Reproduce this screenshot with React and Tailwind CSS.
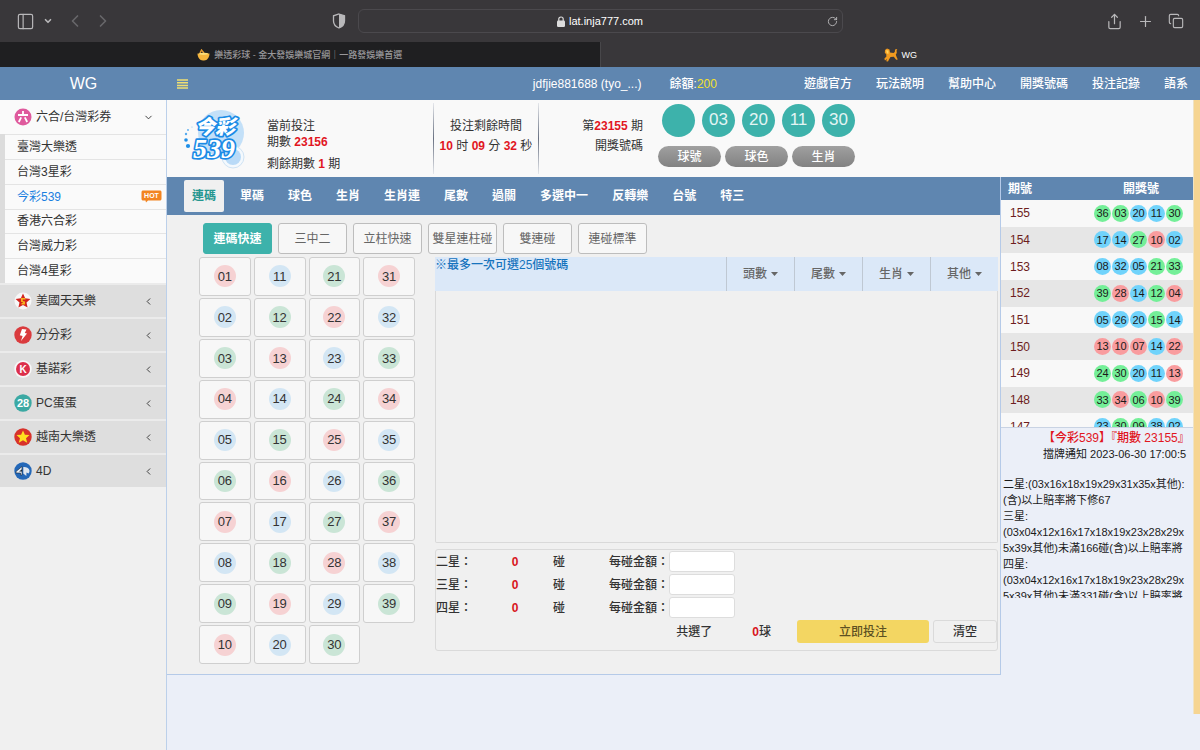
import { useState } from "react";
import { ChevronDown, ChevronLeft, ChevronRight, Copy, PanelLeft, Plus, RotateCw, Share } from "lucide-react";

const subGames = ["臺灣大樂透", "台灣3星彩", "今彩539", "香港六合彩", "台灣威力彩", "台灣4星彩"];
const betTabs = ["連碼", "單碼", "球色", "生肖", "生肖連", "尾數", "過關", "多選中一", "反轉樂", "台號", "特三"];
const playTypes = ["連碼快速", "三中二", "立柱快速", "雙星連柱碰", "雙連碰", "連碰標準"];
const topLinks = ["遊戲官方", "玩法說明", "幫助中心", "開獎號碼", "投注記錄", "語系"];
const filters = ["頭數", "尾數", "生肖", "其他"];
const stars = ["二星", "三星", "四星"];
const numbers = Array.from({ length: 39 }, (_, i) => i + 1);

const history = [
  { issue: "155", balls: [36, 3, 20, 11, 30] },
  { issue: "154", balls: [17, 14, 27, 10, 2] },
  { issue: "153", balls: [8, 32, 5, 21, 33] },
  { issue: "152", balls: [39, 28, 14, 12, 4] },
  { issue: "151", balls: [5, 26, 20, 15, 14] },
  { issue: "150", balls: [13, 10, 7, 14, 22] },
  { issue: "149", balls: [24, 30, 20, 11, 13] },
  { issue: "148", balls: [33, 34, 6, 10, 39] },
  { issue: "147", balls: [23, 30, 9, 38, 2] },
];

const notice = [
  "二星:(03x16x18x19x29x31x35x其他):",
  "(含)以上賠率將下修67",
  "三星:",
  "(03x04x12x16x17x18x19x23x28x29x",
  "5x39x其他)未滿166碰(含)以上賠率將",
  "四星:",
  "(03x04x12x16x17x18x19x23x28x29x",
  "5x39x其他)未滿331碰(含)以上賠率將",
];

// index is number % 3
const softColors = ["bg-[#cae5d6]", "bg-[#f6d2d3]", "bg-[#d3e6f4]"];
const brightColors = ["bg-[#74ef98]", "bg-[#f99c9e]", "bg-[#70d3fb]"];

const pad = (n) => String(n).padStart(2, "0");

const BrowserBar = () => (
  <div className="bg-[#39373a] text-[#b9b8ba]">
    <div className="flex items-center h-[42px]">
      <div className="flex-1 flex items-center pl-4">
        <button aria-label="Sidebar"><PanelLeft size={19} strokeWidth={1.5} /></button>
        <button aria-label="Tab groups" className="ml-2"><ChevronDown size={10} strokeWidth={4} /></button>
        <button aria-label="Back" className="ml-3 text-[#68676a]"><ChevronLeft size={20} strokeWidth={2} /></button>
        <button aria-label="Forward" className="ml-2 text-[#68676a]"><ChevronRight size={20} strokeWidth={2} /></button>
        <button aria-label="Privacy report" className="ml-auto mr-3">
          <svg width="14" height="16" viewBox="0 0 14 16">
            <path d="M7 1 L12.5 2.8 V8 C12.5 11.3 10 13.8 7 15 C4 13.8 1.5 11.3 1.5 8 V2.8 Z" fill="none" stroke="currentColor" strokeWidth="1.3" />
            <path d="M7 1 L12.5 2.8 V8 C12.5 11.3 10 13.8 7 15 Z" fill="currentColor" />
          </svg>
        </button>
      </div>
      <div className="relative w-[485px] h-6 flex items-center justify-center gap-1 rounded-md border border-[#4b494d] text-[11px] font-medium text-white">
        <svg width="8" height="11" viewBox="0 0 8 11">
          <rect x="0" y="4.5" width="8" height="6.5" rx="1.2" fill="#dddddd" />
          <path d="M1.8 5 V3 C1.8 0.3 6.2 0.3 6.2 3 V5" fill="none" stroke="#dddddd" strokeWidth="1.2" />
        </svg>
        <span>lat.inja777.com</span>
        <button aria-label="Reload" className="absolute right-1 text-[#b9b8ba]"><RotateCw size={11} /></button>
      </div>
      <div className="flex-1 flex items-center justify-end gap-[14px] pr-4">
        <button aria-label="Share"><Share size={17} strokeWidth={1.7} /></button>
        <button aria-label="New tab"><Plus size={17} strokeWidth={1.7} /></button>
        <button aria-label="Tab overview"><Copy size={16} strokeWidth={1.7} /></button>
      </div>
    </div>
    <div className="flex h-[25px] text-[9px]">
      <div className="flex-1 flex items-center justify-center gap-1 bg-[#1f1f21] border-r border-[#48474a] text-[#98979a] font-medium">
        <svg width="13" height="12" viewBox="0 0 13 12">
          <path d="M0.5 4.5 H12.5 C12.5 8 10.5 11.5 7 11.5 H6 C2.5 11.5 0.5 8 0.5 4.5 Z" fill="#f5b53d" />
          <path d="M3 4 L4.5 1 L7 4" stroke="#e59a2e" strokeWidth="1.4" fill="none" />
          <ellipse cx="6.5" cy="4.8" rx="4.5" ry="1.1" fill="#fbdc78" />
        </svg>
        <span>樂透彩球 - 金大發娛樂城官網｜一路發娛樂首選</span>
      </div>
      <div className="flex-1 flex items-center justify-center gap-1 text-white">
        <svg width="14" height="14" viewBox="0 0 14 14">
          <path d="M1 2 L3 0.5 L5.5 1.5 L6 4.5 L9.5 5 L10.8 4 L11 1.5 L13.3 1 L12.6 2.4 L12.8 5 L11.8 6.5 L12.6 9 L13.8 11.5 L12.2 11.8 L9.8 8.8 L6.5 9 L5 11.5 L4 13.6 L2.2 13.2 L3 11 L1 12.6 L0.3 10.8 L2.4 8.6 L2.2 6 L0.8 5 Z" fill="#f09a1f" />
          <path d="M2 2.2 L4.6 2.6 L4.4 6 L2.8 5.2 Z" fill="#ffd45e" />
        </svg>
        <span>WG</span>
      </div>
    </div>
  </div>
);

const Header = () => (
  <header className="flex items-center h-[33px] bg-[#5f86b0] text-white font-medium whitespace-nowrap">
    <a href="#" className="w-[167px] text-center text-base">WG</a>
    <button aria-label="選單" className="ml-[10px] text-[#efdf73]">
      <svg width="11" height="10" viewBox="0 0 11 10">
        <path d="M0 1 H11 M0 3.7 H11 M0 6.4 H11 M0 9.1 H11" stroke="currentColor" strokeWidth="1.5" />
      </svg>
    </button>
    <span className="ml-auto">jdfjie881688 (tyo_...)</span>
    <span className="ml-7">餘額:<span className="text-[#f3e02e]">200</span></span>
    <nav className="flex gap-6 ml-[87px] pr-3">
      {topLinks.map((link) => (
        <a key={link} href="#">{link}</a>
      ))}
    </nav>
  </header>
);

const GameIcon = ({ name }) => (
  <svg width="18" height="18" viewBox="0 0 18 18" className="shrink-0">
    {name === "six" && (
      <>
        <circle cx="9" cy="9" r="8.5" fill="#df5a9d" />
        <path d="M9 3 V6.6 M4 7 H14 M7.2 9.4 L4.8 14 M10.8 9.4 L13.2 14" stroke="#fff" strokeWidth="1.8" fill="none" />
      </>
    )}
    {name === "star" && (
      <>
        <circle cx="9" cy="9" r="8.5" fill="#f7f7f7" />
        <path d="M9 1.5 L11.2 6.3 L16.4 6.9 L12.5 10.4 L13.6 15.6 L9 13 L4.4 15.6 L5.5 10.4 L1.6 6.9 L6.8 6.3 Z" fill="#d3241f" />
        <path d="M7 6 H11.5 V7.5 H8.8 V9 L11 9.5 V12.5 H7.5 V11 H9 V10.4 L7 9.8 Z" fill="#f6b21c" />
      </>
    )}
    {name === "bolt" && (
      <>
        <circle cx="9" cy="9" r="8.7" fill="#da3b3e" />
        <path d="M8 3 L12.5 3.5 L10.8 7 L13 7.6 L7 15 L8.6 10 L5.8 9.3 Z" fill="#fff" />
      </>
    )}
    {name === "keno" && (
      <>
        <circle cx="9" cy="9" r="8.7" fill="#f8f8f8" />
        <circle cx="9" cy="9" r="7" fill="#dc2f4b" />
        <text x="9" y="12.5" textAnchor="middle" fontSize="10" fontWeight="bold" fill="#fff">K</text>
      </>
    )}
    {name === "pc" && (
      <>
        <circle cx="9" cy="9" r="8.7" fill="#3ba9a3" />
        <text x="9" y="12.7" textAnchor="middle" fontSize="11" fontWeight="bold" fill="#fff">28</text>
      </>
    )}
    {name === "vn" && (
      <>
        <circle cx="9" cy="9" r="8.7" fill="#d8322b" />
        <path d="M9 2.5 L10.9 6.8 L15.5 7.1 L12 10.2 L13.2 14.7 L9 12.2 L4.8 14.7 L6 10.2 L2.5 7.1 L7.1 6.8 Z" fill="#ffe01f" />
      </>
    )}
    {name === "4d" && (
      <>
        <circle cx="9" cy="9" r="8.7" fill="#2468b8" />
        <path d="M2 9.5 L8 4.5 V13 H6.5 V11 H2 Z" fill="#e8eef5" stroke="#1b2733" strokeWidth="0.6" />
        <path d="M9.3 5 C15 4.5 17 9 14.5 11.5 L12.5 10.5 L12.3 14 L9.3 11.5 Z" fill="#dfe6ee" />
        <path d="M5 9.5 H8 V7.2 Z" fill="#1b2733" />
      </>
    )}
  </svg>
);

const groups = [
  { name: "美國天天樂", icon: "star" },
  { name: "分分彩", icon: "bolt" },
  { name: "基諾彩", icon: "keno" },
  { name: "PC蛋蛋", icon: "pc" },
  { name: "越南大樂透", icon: "vn" },
  { name: "4D", icon: "4d" },
];

const Sidebar = () => (
  <aside className="w-[167px] shrink-0 bg-[#f0f0f0] border-r border-[#bcd0ea]">
    <button className="flex items-center gap-1 w-full h-[34px] pl-[14px] pr-3 bg-[#fafafa]">
      <GameIcon name="six" />
      <span>六合/台灣彩券</span>
      <ChevronDown size={11} className="ml-auto" />
    </button>
    <ul className="grid auto-rows-fr h-[149px] border-l-[5px] border-[#dcdcdc] bg-[#fafafa]">
      {subGames.map((game) => (
        <li key={game} className="border-t border-[#e4e4e4]">
          <a
            href="#"
            className={`flex items-center justify-between h-full pl-3 pr-1 ${game === "今彩539" ? "text-[#1a7fe0]" : ""}`}
          >
            {game}
            {game === "今彩539" && (
              <svg width="21" height="13" viewBox="0 0 21 13">
                <path d="M2.5 0.5 H18.5 C20 0.5 20.5 1 20.5 2.5 V8.5 C20.5 10 20 10.5 18.5 10.5 H7 L5 12.5 L4.5 10.5 H2.5 C1 10.5 0.5 10 0.5 8.5 V2.5 C0.5 1 1 0.5 2.5 0.5 Z" fill="#f28421" />
                <text x="10.5" y="8" textAnchor="middle" fontSize="7" fontWeight="bold" fill="#fff">HOT</text>
              </svg>
            )}
          </a>
        </li>
      ))}
    </ul>
    {groups.map((group) => (
      <button
        key={group.name}
        className="flex items-center gap-1 w-full h-[34px] pl-[14px] pr-3 bg-[#dedede] border-t-2 border-[#ebebeb]"
      >
        <GameIcon name={group.icon} />
        <span>{group.name}</span>
        <ChevronLeft size={11} className="ml-auto" />
      </button>
    ))}
  </aside>
);

const Logo = () => (
  <svg width="64" height="62" viewBox="0 0 64 62" role="img" aria-label="今彩539">
    <circle cx="38" cy="25" r="23" fill="#c3e0f8" />
    <circle cx="50" cy="49" r="11" fill="#f4f9fd" stroke="#cfe3f4" strokeWidth="1" />
    <circle cx="50" cy="49" r="8" fill="#b9daf7" />
    <circle cx="5" cy="38" r="2.1" fill="#1f8fe8" />
    <circle cx="3" cy="32" r="1.8" fill="#1f8fe8" />
    <circle cx="3" cy="26" r="1.2" fill="#55abef" />
    <circle cx="5" cy="22" r="0.9" fill="#55abef" />
    <circle cx="9" cy="19" r="0.6" fill="#8cc6f4" />
    <g fill="#fff" stroke="#1b8be6" strokeWidth="3.4" paintOrder="stroke" strokeLinejoin="round">
      <text x="12" y="26" fontSize="20" fontWeight="900" fontStyle="italic">今彩</text>
      <text x="10" y="50" fontSize="28" className="font-['Liberation_Serif',serif] font-bold italic">539</text>
    </g>
  </svg>
);

const Red = ({ children }) => <b className="text-[#e1161f]">{children}</b>;

const RoundInfo = () => (
  <section className="flex h-[77px] bg-[#f9f9f9] whitespace-nowrap">
    <div className="pl-4 pt-2 w-[100px]"><Logo /></div>
    <div className="w-[166px] pt-[18px] leading-4">
      <p>當前投注</p>
      <p>期數 <Red>23156</Red></p>
      <p className="mt-[6px]">剩餘期數 <Red>1</Red> 期</p>
    </div>
    <div className="w-px my-[3px] bg-gradient-to-b from-gray-200 via-gray-500 to-gray-200" />
    <div className="w-[104px] pt-4 leading-5 text-center">
      <p>投注剩餘時間</p>
      <p><Red>10</Red> 时 <Red>09</Red> 分 <Red>32</Red> 秒</p>
    </div>
    <div className="w-px my-[3px] bg-gradient-to-b from-gray-200 via-gray-500 to-gray-200" />
    <div className="w-[104px] pt-4 leading-5 text-right">
      <p>第<Red>23155</Red> 期</p>
      <p>開獎號碼</p>
    </div>
    <div className="pl-[15px] pt-1">
      <div className="flex gap-[7px] pl-1">
        {["", "03", "20", "11", "30"].map((ball, i) => (
          <span key={i} className="flex items-center justify-center size-[33px] rounded-full bg-[#3db2ab] text-[17px] text-[#e4f5f4]">
            {ball}
          </span>
        ))}
      </div>
      <div className="flex gap-1 mt-[9px] text-white font-medium">
        {["球號", "球色", "生肖"].map((label) => (
          <button key={label} className="w-[63px] h-[21px] rounded-full bg-gradient-to-b from-[#a0a0a0] to-[#828282]">
            {label}
          </button>
        ))}
      </div>
    </div>
  </section>
);

const BetPanel = () => {
  const [tab, setTab] = useState("連碼");
  const [play, setPlay] = useState("連碼快速");
  const [selected, setSelected] = useState([]);

  const toggle = (n) => {
    if (selected.includes(n)) {
      setSelected(selected.filter((s) => s !== n));
    } else if (selected.length < 25) {
      setSelected([...selected, n]);
    }
  };

  return (
    <main className="bg-[#f0f0f0] border-r border-b border-[#b5cae8] pb-[10px]">
      <div className="flex items-center gap-2 h-[38px] pl-[17px] bg-[#5f86b0] font-bold text-white">
        {betTabs.map((name) => (
          <button
            key={name}
            onClick={() => setTab(name)}
            className={`h-8 px-2 rounded-xs ${tab === name ? "bg-[#f0f0f0] text-[#25968f]" : ""}`}
          >
            {name}
          </button>
        ))}
      </div>

      <div className="flex gap-[6px] pl-9 pt-2">
        {playTypes.map((name) => (
          <button
            key={name}
            onClick={() => setPlay(name)}
            className={`w-[69px] h-[31px] rounded-[3px] border ${
              play === name ? "bg-[#3db2ab] border-[#3db2ab] text-white font-bold" : "bg-[#f7f7f7] border-[#bdbdbd] text-[#666666]"
            }`}
          >
            {name}
          </button>
        ))}
      </div>

      <div className="flex gap-5 pl-8 pr-[2px] pt-[3px]">
        <div className="grid grid-flow-col grid-rows-10 auto-cols-fr gap-x-[3px] gap-y-[2px] w-[216px] h-[407px] text-[13px]">
          {numbers.map((n) => (
            <button
              key={n}
              onClick={() => toggle(n)}
              className={`flex items-center justify-center rounded-[3px] border border-[#cfcfcf] ${
                selected.includes(n) ? "bg-[#fff3c4]" : "bg-[#f7f7f7]"
              }`}
            >
              <span className={`flex items-center justify-center size-[22px] rounded-full ${softColors[n % 3]}`}>{pad(n)}</span>
            </button>
          ))}
        </div>

        <div className="flex-1">
          <div className="flex h-[34px] bg-[#dbe8f8]">
            <p className="flex-1 leading-4 text-[#1673bd] font-medium">※最多一次可選25個號碼</p>
            {filters.map((name) => (
              <button key={name} className="flex items-center justify-center gap-1 w-[68px] border-l border-[#bfc8d3] text-[#666666] font-medium">
                {name}
                <svg width="7" height="4" viewBox="0 0 7 4"><path d="M0 0 H7 L3.5 4 Z" fill="#666666" /></svg>
              </button>
            ))}
          </div>
          <div className="h-[252px] border border-t-0 border-[#d9d9d9] rounded-b-xs" />

          <form className="mt-[6px] pb-[7px] border border-[#dadada] rounded-[3px] font-medium" onSubmit={(e) => e.preventDefault()}>
            {stars.map((star) => (
              <div key={star} className="flex items-center h-[23px]">
                <span className="w-[69px]">{star}：</span>
                <b className="w-5 text-center text-[#d8151c]">0</b>
                <span className="w-[68px] text-center">碰</span>
                <label htmlFor={star} className="w-[76px] text-right">每碰金額：</label>
                <input id={star} type="text" className="w-[66px] h-[21px] px-1 bg-white border border-[#dddddd] rounded-[3px]" />
              </div>
            ))}
            <div className="flex items-center justify-end pt-px">
              <span>共選了</span>
              <span className="ml-10"><b className="text-[#d8151c]">{selected.length}</b>球</span>
              <button type="submit" className="ml-[26px] w-[132px] h-[23px] rounded-[3px] bg-[#f3d662] text-[#5d5122]">
                立即投注
              </button>
              <button type="button" onClick={() => setSelected([])} className="ml-1 w-16 h-[23px] rounded-[3px] border border-[#dadada]">
                清空
              </button>
            </div>
          </form>
        </div>
      </div>
    </main>
  );
};

const HistoryPanel = () => (
  <aside className="w-[192px] shrink-0">
    <div className="h-[250px] overflow-hidden">
      <table className="w-full h-[263px] table-fixed">
        <thead>
          <tr className="h-[23px] bg-[#5f86b0] text-white">
            <th className="w-[88px] pl-[7px] text-left font-bold">期號</th>
            <th className="font-bold">開獎號</th>
          </tr>
        </thead>
        <tbody className="text-[#6d1d20]">
          {history.map((row) => (
            <tr key={row.issue} className="bg-[#f8f8f8] even:bg-[#e6e6e6]">
              <td className="pl-[9px]">{row.issue}</td>
              <td>
                <div className="flex gap-px pl-[5px]">
                  {row.balls.map((n) => (
                    <span key={n} className={`flex items-center justify-center size-[17px] rounded-full text-[11px] text-[#1a1a1a] ${brightColors[n % 3]}`}>
                      {pad(n)}
                    </span>
                  ))}
                </div>
              </td>
            </tr>
          ))}
        </tbody>
      </table>
    </div>
    <div className="h-[171px] pt-[2px] pl-[2px] overflow-hidden border-t border-[#c9d3e3] text-[11px] leading-4 whitespace-nowrap text-[#1a1a1a]">
      <p className="pl-10 text-xs text-[#e1161f] font-medium">【今彩539】『期數 23155』</p>
      <p className="pl-10">擋牌通知 2023-06-30 17:00:5</p>
      <div className="mt-[14px]">
        {notice.map((line, i) => (
          <p key={i}>{line}</p>
        ))}
      </div>
    </div>
  </aside>
);

const App = () => (
  <div
    lang="zh-Hant"
    className="flex flex-col min-h-screen bg-[#ebeff8] text-xs text-[#333333] font-['Liberation_Sans','Noto_Sans_CJK_TC',sans-serif]"
  >
    <BrowserBar />
    <Header />
    <div className="flex flex-1">
      <Sidebar />
      <div className="flex-1 min-w-0">
        <RoundInfo />
        <div className="flex items-start">
          <div className="flex-1 min-w-0">
            <BetPanel />
          </div>
          <HistoryPanel />
        </div>
      </div>
      <div className="w-[7px] mb-9 bg-[#f6d592] border-l border-[#f0e3c4]" />
    </div>
  </div>
);

export default App;
